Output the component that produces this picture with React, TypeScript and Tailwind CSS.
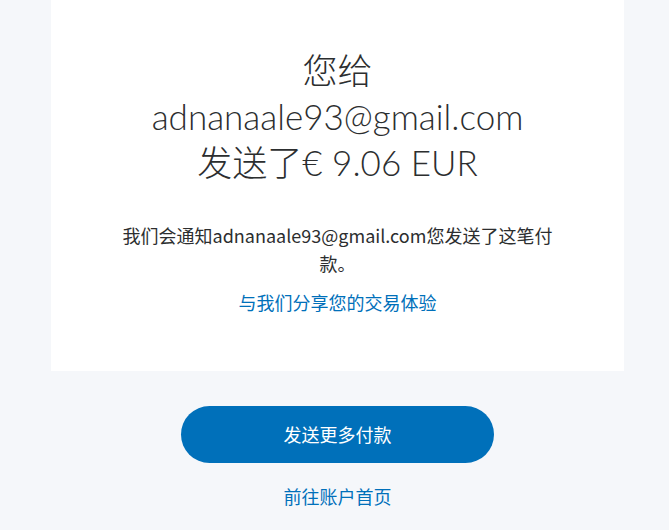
const SANS = "font-['Lato','Noto_Sans_CJK_SC',sans-serif]";

const App = () => {
  return (
    <div className={`min-h-[530px] w-full bg-[#f5f7fa] pl-[6px] ${SANS} text-[#2c2e2f]`}>
      <div className="mx-[45px] flex flex-col items-center bg-white pt-[47px] pb-[56px]">
        <h1 className="text-center text-[35px] font-light leading-[46px]">
          <div>您给</div>
          <div>adnanaale93@gmail.com</div>
          <div>
            发送了<span>€ 9.06 EUR</span>
          </div>
        </h1>
        <p className="mt-[36px] w-[450px] text-center text-[18px] leading-[28px] font-['Noto_Sans_CJK_SC',sans-serif]">
          我们会通知adnanaale93@gmail.com您发送了这笔付款。
        </p>
        <a className="mt-[12px] text-[18px] leading-[26px] text-[#0070ba] font-['Noto_Sans_CJK_SC',sans-serif]">
          与我们分享您的交易体验
        </a>
      </div>
      <div className="flex flex-col items-center pt-[35px] font-['Noto_Sans_CJK_SC',sans-serif]">
        <button className="h-[57px] w-[313px] rounded-full bg-[#0070ba] text-[18px] text-white">
          发送更多付款
        </button>
        <a className="mt-[20px] text-[18px] leading-[26px] text-[#0070ba]">前往账户首页</a>
      </div>
    </div>
  );
};

export default App;
